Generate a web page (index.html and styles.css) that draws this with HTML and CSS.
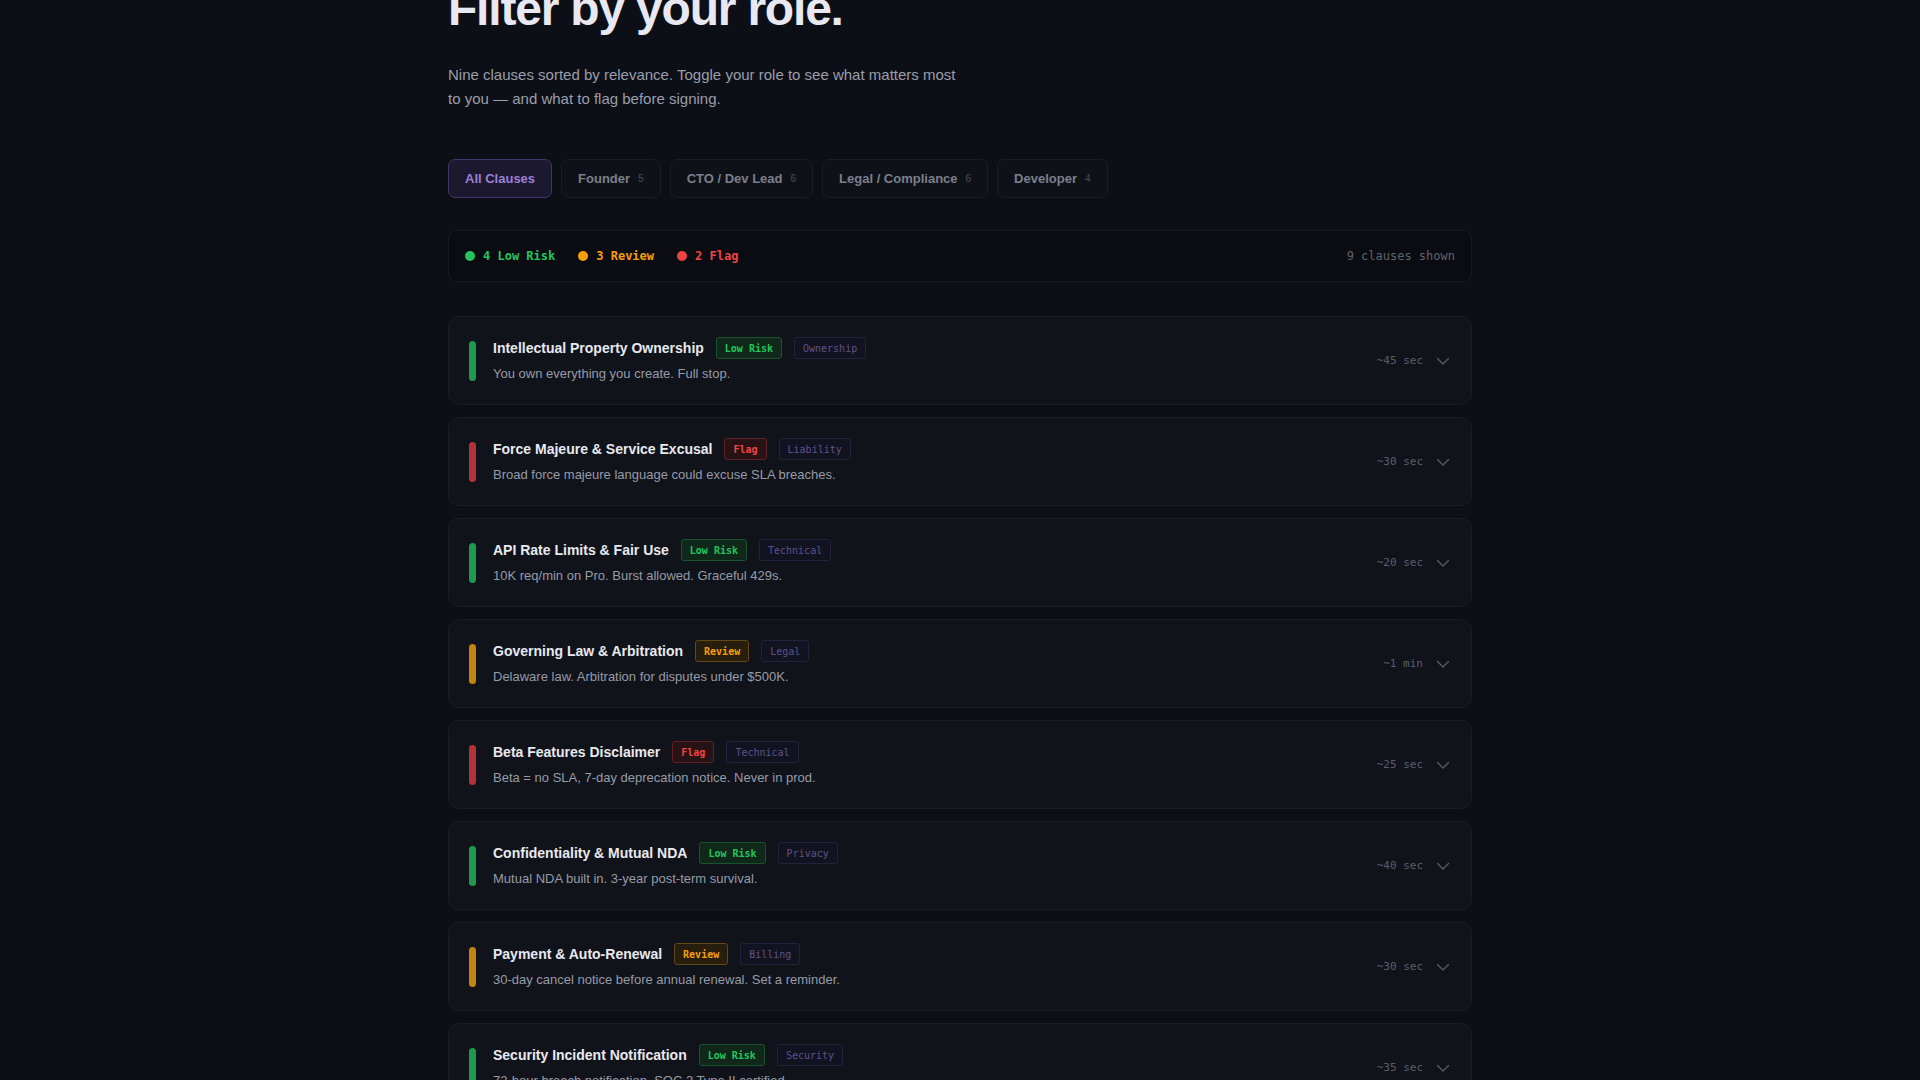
FILE: index.html
```html
<!DOCTYPE html>
<html lang="en">
<head>
<meta charset="utf-8">
<title>Filter by your role</title>
<link rel="stylesheet" href="styles.css">
</head>
<body>
<main class="page">
  <h1 class="title">Filter by your role.</h1>
  <p class="lead">Nine clauses sorted by relevance. Toggle your role to see what matters most to you — and what to flag before signing.</p>

  <nav class="tabs">
    <button class="tab active">All Clauses</button>
    <button class="tab">Founder <span class="count">5</span></button>
    <button class="tab">CTO / Dev Lead <span class="count">6</span></button>
    <button class="tab">Legal / Compliance <span class="count">6</span></button>
    <button class="tab">Developer <span class="count">4</span></button>
  </nav>

  <div class="summary">
    <div class="legend">
      <span class="legend-item green"><i class="dot"></i>4 Low Risk</span>
      <span class="legend-item amber"><i class="dot"></i>3 Review</span>
      <span class="legend-item red"><i class="dot"></i>2 Flag</span>
    </div>
    <span class="shown">9 clauses shown</span>
  </div>

  <section class="list">
    <article class="card">
      <span class="bar green"></span>
      <div class="body">
        <div class="row"><h3 class="name">Intellectual Property Ownership</h3><span class="badge green">Low Risk</span><span class="tag">Ownership</span></div>
        <p class="desc">You own everything you create. Full stop.</p>
      </div>
      <span class="time">~45 sec</span>
      <svg class="chev" width="16" height="16" viewBox="0 0 16 16"><polyline points="2.5,5.5 8,11 13.5,5.5" fill="none" stroke="currentColor" stroke-width="1.4" stroke-linecap="round" stroke-linejoin="round"/></svg>
    </article>

    <article class="card">
      <span class="bar red"></span>
      <div class="body">
        <div class="row"><h3 class="name">Force Majeure &amp; Service Excusal</h3><span class="badge red">Flag</span><span class="tag">Liability</span></div>
        <p class="desc">Broad force majeure language could excuse SLA breaches.</p>
      </div>
      <span class="time">~30 sec</span>
      <svg class="chev" width="16" height="16" viewBox="0 0 16 16"><polyline points="2.5,5.5 8,11 13.5,5.5" fill="none" stroke="currentColor" stroke-width="1.4" stroke-linecap="round" stroke-linejoin="round"/></svg>
    </article>

    <article class="card">
      <span class="bar green"></span>
      <div class="body">
        <div class="row"><h3 class="name">API Rate Limits &amp; Fair Use</h3><span class="badge green">Low Risk</span><span class="tag">Technical</span></div>
        <p class="desc">10K req/min on Pro. Burst allowed. Graceful 429s.</p>
      </div>
      <span class="time">~20 sec</span>
      <svg class="chev" width="16" height="16" viewBox="0 0 16 16"><polyline points="2.5,5.5 8,11 13.5,5.5" fill="none" stroke="currentColor" stroke-width="1.4" stroke-linecap="round" stroke-linejoin="round"/></svg>
    </article>

    <article class="card">
      <span class="bar amber"></span>
      <div class="body">
        <div class="row"><h3 class="name">Governing Law &amp; Arbitration</h3><span class="badge amber">Review</span><span class="tag">Legal</span></div>
        <p class="desc">Delaware law. Arbitration for disputes under $500K.</p>
      </div>
      <span class="time">~1 min</span>
      <svg class="chev" width="16" height="16" viewBox="0 0 16 16"><polyline points="2.5,5.5 8,11 13.5,5.5" fill="none" stroke="currentColor" stroke-width="1.4" stroke-linecap="round" stroke-linejoin="round"/></svg>
    </article>

    <article class="card">
      <span class="bar red"></span>
      <div class="body">
        <div class="row"><h3 class="name">Beta Features Disclaimer</h3><span class="badge red">Flag</span><span class="tag">Technical</span></div>
        <p class="desc">Beta = no SLA, 7-day deprecation notice. Never in prod.</p>
      </div>
      <span class="time">~25 sec</span>
      <svg class="chev" width="16" height="16" viewBox="0 0 16 16"><polyline points="2.5,5.5 8,11 13.5,5.5" fill="none" stroke="currentColor" stroke-width="1.4" stroke-linecap="round" stroke-linejoin="round"/></svg>
    </article>

    <article class="card">
      <span class="bar green"></span>
      <div class="body">
        <div class="row"><h3 class="name">Confidentiality &amp; Mutual NDA</h3><span class="badge green">Low Risk</span><span class="tag">Privacy</span></div>
        <p class="desc">Mutual NDA built in. 3-year post-term survival.</p>
      </div>
      <span class="time">~40 sec</span>
      <svg class="chev" width="16" height="16" viewBox="0 0 16 16"><polyline points="2.5,5.5 8,11 13.5,5.5" fill="none" stroke="currentColor" stroke-width="1.4" stroke-linecap="round" stroke-linejoin="round"/></svg>
    </article>

    <article class="card">
      <span class="bar amber"></span>
      <div class="body">
        <div class="row"><h3 class="name">Payment &amp; Auto-Renewal</h3><span class="badge amber">Review</span><span class="tag">Billing</span></div>
        <p class="desc">30-day cancel notice before annual renewal. Set a reminder.</p>
      </div>
      <span class="time">~30 sec</span>
      <svg class="chev" width="16" height="16" viewBox="0 0 16 16"><polyline points="2.5,5.5 8,11 13.5,5.5" fill="none" stroke="currentColor" stroke-width="1.4" stroke-linecap="round" stroke-linejoin="round"/></svg>
    </article>

    <article class="card">
      <span class="bar green"></span>
      <div class="body">
        <div class="row"><h3 class="name">Security Incident Notification</h3><span class="badge green">Low Risk</span><span class="tag">Security</span></div>
        <p class="desc">72-hour breach notification. SOC 2 Type II certified.</p>
      </div>
      <span class="time">~35 sec</span>
      <svg class="chev" width="16" height="16" viewBox="0 0 16 16"><polyline points="2.5,5.5 8,11 13.5,5.5" fill="none" stroke="currentColor" stroke-width="1.4" stroke-linecap="round" stroke-linejoin="round"/></svg>
    </article>

    <article class="card">
      <span class="bar amber"></span>
      <div class="body">
        <div class="row"><h3 class="name">Data Retention &amp; Deletion</h3><span class="badge amber">Review</span><span class="tag">Privacy</span></div>
        <p class="desc">Data deleted 30 days after termination. Export before you leave.</p>
      </div>
      <span class="time">~30 sec</span>
      <svg class="chev" width="16" height="16" viewBox="0 0 16 16"><polyline points="2.5,5.5 8,11 13.5,5.5" fill="none" stroke="currentColor" stroke-width="1.4" stroke-linecap="round" stroke-linejoin="round"/></svg>
    </article>
  </section>
</main>
</body>
</html>
```

FILE: styles.css
```css
* { box-sizing: border-box; }

html, body {
  margin: 0;
  padding: 0;
  background: #0d0f16;
}

body {
  font-family: "Liberation Sans", Arial, sans-serif;
  color: #e6e7ee;
  overflow: hidden;
}

.page {
  width: 1024px;
  margin: 0 auto;
  padding-bottom: 80px;
}

.title {
  margin: -15px 0 0;
  font-size: 48px;
  line-height: 48px;
  font-weight: 700;
  letter-spacing: -0.025em;
  color: #e8e8f2;
}

.lead {
  margin: 30px 0 0;
  max-width: 512px;
  font-size: 15px;
  line-height: 24px;
  color: #9a9eab;
}

.tabs {
  display: flex;
  gap: 9px;
  margin-top: 48px;
}

.tab {
  display: inline-flex;
  align-items: center;
  gap: 8px;
  height: 39px;
  padding: 0 16px;
  border: 1px solid #1b1d26;
  border-radius: 7px;
  background: #0f1118;
  color: #7b7f8b;
  font-family: "Liberation Sans", Arial, sans-serif;
  font-size: 13px;
  font-weight: 700;
}

.tab.active {
  background: #1c1830;
  border-color: #43356b;
  color: #9d80d6;
}

.count {
  font-size: 10px;
  font-weight: 400;
  color: #4b4e58;
}

.summary {
  display: flex;
  align-items: center;
  justify-content: space-between;
  margin-top: 32px;
  height: 52px;
  padding: 0 16px;
  border: 1px solid #181a22;
  border-radius: 9px;
  background: #0a0c11;
  font-family: "DejaVu Sans Mono", "Liberation Mono", monospace;
  font-size: 12px;
}

.legend {
  display: flex;
  gap: 23px;
}

.legend-item {
  display: inline-flex;
  align-items: center;
  gap: 8px;
  font-weight: 600;
}

.dot {
  width: 10px;
  height: 10px;
  border-radius: 50%;
  background: currentColor;
}

.legend-item.green { color: #22c55e; }
.legend-item.amber { color: #f59e0b; }
.legend-item.red { color: #ef4444; }

.shown { color: #5f636e; }

.list {
  display: flex;
  flex-direction: column;
  gap: 12px;
  margin-top: 34px;
}

.card {
  display: flex;
  align-items: center;
  gap: 17px;
  padding: 20px;
  border: 1px solid #1a1d25;
  border-radius: 11px;
  background: #10131a;
}

.bar {
  flex: none;
  width: 7px;
  height: 40px;
  border-radius: 4px;
}

.bar.green { background: #1d9a4d; }
.bar.red { background: #b5323a; }
.bar.amber { background: #c2850d; }

.body {
  flex: 1;
  min-width: 0;
}

.row {
  display: flex;
  align-items: center;
  gap: 12px;
  height: 22px;
}

.name {
  margin: 0;
  font-size: 14px;
  font-weight: 700;
  color: #e8e9ef;
}

.badge, .tag {
  display: inline-flex;
  align-items: center;
  height: 22px;
  padding: 0 8px;
  border: 1px solid;
  border-radius: 3px;
  font-family: "DejaVu Sans Mono", "Liberation Mono", monospace;
  font-size: 10px;
}

.badge { font-weight: 700; }

.badge.green {
  color: #22c55e;
  background: #0f2819;
  border-color: #1a5231;
}

.badge.red {
  color: #ef4444;
  background: #271216;
  border-color: #622127;
}

.badge.amber {
  color: #f59e0b;
  background: #281e0e;
  border-color: #634814;
}

.tag {
  color: #5f5288;
  background: #14132690;
  border-color: #25213a;
}

.desc {
  margin: 4px 0 0;
  font-size: 13px;
  line-height: 21px;
  color: #979ba7;
}

.time {
  flex: none;
  font-family: "DejaVu Sans Mono", "Liberation Mono", monospace;
  font-size: 11px;
  color: #5a5f6b;
}

.chev {
  flex: none;
  margin-left: -5px;
  color: #565b67;
}
```
